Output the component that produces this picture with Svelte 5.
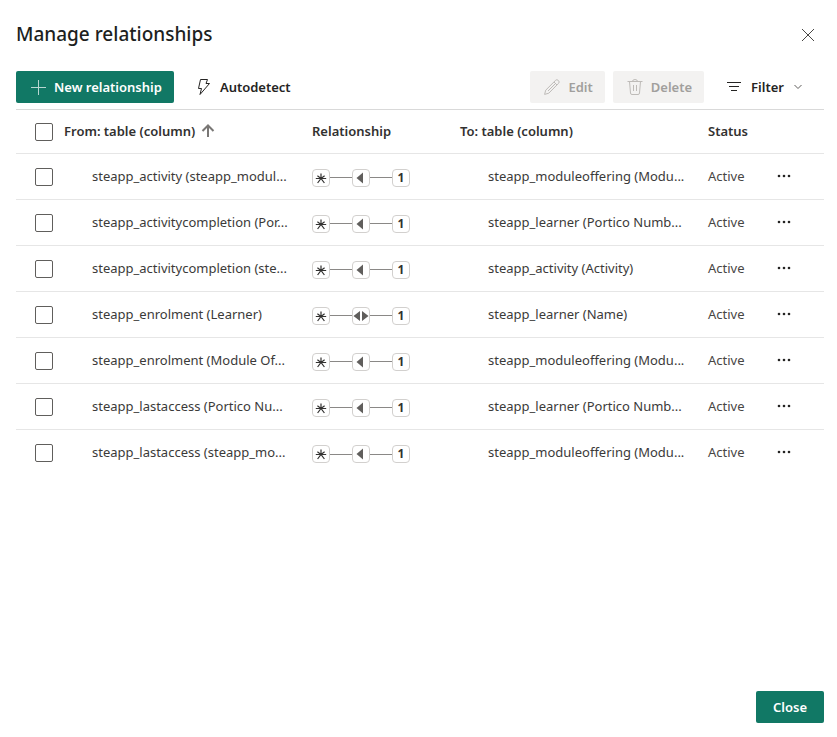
<script>
	const rows = [
		{ from: 'steapp_activity (steapp_modul...', to: 'steapp_moduleoffering (Modu...', both: false },
		{ from: 'steapp_activitycompletion (Por...', to: 'steapp_learner (Portico Numb...', both: false },
		{ from: 'steapp_activitycompletion (ste...', to: 'steapp_activity (Activity)', both: false },
		{ from: 'steapp_enrolment (Learner)', to: 'steapp_learner (Name)', both: true },
		{ from: 'steapp_enrolment (Module Of...', to: 'steapp_moduleoffering (Modu...', both: false },
		{ from: 'steapp_lastaccess (Portico Nu...', to: 'steapp_learner (Portico Numb...', both: false },
		{ from: 'steapp_lastaccess (steapp_mo...', to: 'steapp_moduleoffering (Modu...', both: false }
	];

	let selected = $state(rows.map(() => false));
	let count = $derived(selected.filter(Boolean).length);

	const toggleAll = (e) => {
		const { checked } = e.currentTarget;
		selected = rows.map(() => checked);
	};
</script>

<div class="dialog" role="dialog" aria-labelledby="title">
	<header>
		<h1 id="title">Manage relationships</h1>
		<button class="dismiss" aria-label="Dismiss">
			<svg width="14" height="14" viewBox="0 0 14 14"><path d="M1 1l12 12M13 1L1 13" /></svg>
		</button>
	</header>

	<div class="toolbar">
		<button class="primary new">
			<svg width="16" height="16" viewBox="0 0 16 16"><path d="M8.5 1v15M1 8.5h15" /></svg>
			New relationship
		</button>
		<button class="plain">
			<svg width="16" height="18" viewBox="0 0 16 18">
				<path d="M4.5 1.5h7L10 5.5h3.5L4 16.5l1.5-6h-3z" />
			</svg>
			Autodetect
		</button>
		<div class="spacer"></div>
		<button class="muted" disabled={count !== 1}>
			<svg width="16" height="16" viewBox="0 0 16 16">
				<path
					d="M.6 15.4l1.1-4.2L11.4 1.5a2 2 0 0 1 3 0 2 2 0 0 1 0 3L4.8 14.2zM10 3l3 3M11.5 4.5L4 12"
				/>
			</svg>
			Edit
		</button>
		<button class="muted" disabled={count === 0}>
			<svg width="16" height="16" viewBox="0 0 16 16">
				<path
					d="M.5 2.5h15M5.5 2.5a2.5 2 0 0 1 5 0M2.5 2.5l1 11.5a1.5 1.5 0 0 0 1.5 1.5h6a1.5 1.5 0 0 0 1.5-1.5l1-11.5M6.5 6v6M9.5 6v6"
				/>
			</svg>
			Delete
		</button>
		<button class="filter">
			<svg width="14" height="12" viewBox="0 0 14 12"><path d="M0 1.5h14M2 5.5h10M4 9.5h6" /></svg>
			Filter
			<svg class="chevron" width="8" height="6" viewBox="0 0 8 6"><path d="M.5 1L4 4.5 7.5 1" /></svg>
		</button>
	</div>

	<table>
		<colgroup>
			<col class="col-check" />
			<col />
			<col class="col-rel" />
			<col />
			<col class="col-status" />
			<col class="col-more" />
		</colgroup>
		<thead>
			<tr>
				<td class="check">
					<input
						type="checkbox"
						aria-label="Select all relationships"
						checked={count === rows.length}
						onchange={toggleAll}
					/>
				</td>
				<th scope="col" aria-sort="ascending">
					<span class="sorted">
						From: table (column)
						<svg width="14" height="14" viewBox="0 0 14 14"><path d="M7 13V2M1.5 7L7 1.5 12.5 7" /></svg>
					</span>
				</th>
				<th scope="col">Relationship</th>
				<th scope="col">To: table (column)</th>
				<th scope="col">Status</th>
				<td></td>
			</tr>
		</thead>
		<tbody>
			{#each rows as row, i}
				<tr>
					<td class="check">
						<input type="checkbox" aria-label="Select {row.from}" bind:checked={selected[i]} />
					</td>
					<td class="name">{row.from}</td>
					<td class="rel">
						<div class="link">
							<span class="chip">
								<svg class="star" width="12" height="12" viewBox="0 0 12 12">
									<path d="M6 1.5v5M.8 6.5h10.4M2.4 3.8L6 6.500l3.600-2.700M2.600 11L6 6.500l3.400 4.500" />
								</svg>
							</span>
							<span class="line"></span>
							<span class="chip">
								<svg class="arrow" width="16" height="12" viewBox="0 0 16 12">
									{#if row.both}
										<path d="M7 1v10L.5 6zM9 1v10l6.5-5z" />
									{:else}
										<path d="M10 .5v11L3.5 6z" />
									{/if}
								</svg>
							</span>
							<span class="line"></span>
							<span class="chip">1</span>
						</div>
					</td>
					<td class="name">{row.to}</td>
					<td class="status">Active</td>
					<td>
						<button class="more" aria-label="More options">
							<svg width="14" height="4" viewBox="0 0 14 4">
								<circle cx="2" cy="2" r="1.3" />
								<circle cx="7" cy="2" r="1.3" />
								<circle cx="12" cy="2" r="1.3" />
							</svg>
						</button>
					</td>
				</tr>
			{/each}
		</tbody>
	</table>

	<footer>
		<button class="primary close">Close</button>
	</footer>
</div>

<style>
	:global(body) {
		background: #fff;
	}
	.dialog {
		box-sizing: border-box;
		min-height: 100vh;
		display: flex;
		flex-direction: column;
		padding: 20px 13px 14px 16px;
		font-family: 'Segoe UI', 'Noto Sans', sans-serif;
		font-size: 13px;
		line-height: 20px;
		color: #323130;
	}
	header {
		display: flex;
		align-items: center;
		justify-content: space-between;
		height: 30px;
		padding-right: 8px;
		margin-bottom: 21px;
	}
	h1 {
		margin: 0;
		padding-bottom: 2px;
		font-size: 19px;
		line-height: 28px;
		font-weight: 500;
		color: #201f1e;
	}
	svg {
		flex: none;
		fill: none;
		stroke: currentColor;
	}
	button {
		display: flex;
		align-items: center;
		height: 32px;
		padding: 0 16px;
		border: 0;
		border-radius: 2px;
		background: none;
		color: #252423;
		font: inherit;
		font-weight: 600;
		white-space: nowrap;
	}
	.dismiss {
		height: 16px;
		padding: 0 1px;
		color: #484644;
	}
	.toolbar {
		display: flex;
		gap: 8px;
		padding-bottom: 6px;
	}
	.toolbar button {
		gap: 8px;
		padding: 0 12px 0 14px;
	}
	.primary {
		background: #117865;
		color: #fff;
	}
	.new svg {
		opacity: 0.7;
	}
	.spacer {
		flex: 1;
	}
	.muted:disabled {
		background: #f3f2f1;
		color: #a19f9d;
	}
	.muted:disabled svg {
		color: #bebbb8;
	}
	.toolbar .filter {
		gap: 10px;
		padding: 0 22px 0 15px;
	}
	.chevron {
		color: #605e5c;
	}
	table {
		width: 100%;
		table-layout: fixed;
		border-collapse: separate;
		border-spacing: 0;
		border-top: 1px solid #d9d9d9;
	}
	.col-check {
		width: 48px;
	}
	.col-rel {
		width: 148px;
	}
	.col-status {
		width: 68px;
	}
	.col-more {
		width: 48px;
	}
	th,
	td {
		box-sizing: border-box;
		height: 46px;
		padding: 0 0 2px;
		border-bottom: 1px solid #e6e6e6;
		text-align: left;
		vertical-align: middle;
	}
	thead th,
	thead td {
		height: 44px;
		font-weight: 600;
	}
	tbody tr:last-child td {
		border-bottom: 0;
	}
	.sorted {
		display: flex;
		align-items: center;
		gap: 6px;
	}
	.sorted svg {
		color: #797775;
		stroke-width: 2;
	}
	.check {
		padding: 0 0 0 19px;
	}
	.rel {
		padding: 2px 0 0;
	}
	input {
		display: block;
		box-sizing: border-box;
		width: 18px;
		height: 18px;
		margin: 0;
		appearance: none;
		border: 1px solid #605e5c;
		border-radius: 2px;
		background: #fff;
	}
	input:checked {
		border-color: #117865;
		background: #117865;
	}
	.name {
		padding: 0 20px 2px 28px;
		overflow: hidden;
		text-overflow: ellipsis;
		white-space: nowrap;
		color: #3b3a39;
	}
	.status {
		color: #484644;
	}
	.link {
		display: flex;
		align-items: center;
	}
	.chip {
		box-sizing: border-box;
		width: 18px;
		height: 18px;
		display: flex;
		align-items: center;
		justify-content: center;
		border: 1px solid #d2d0ce;
		border-radius: 4px;
		font-size: 12px;
		line-height: 16px;
		font-weight: 700;
	}
	.line {
		width: 22px;
		height: 1px;
		background: #8a8886;
	}
	.star {
		stroke-width: 1.2;
	}
	.arrow {
		fill: #605e5c;
		stroke: none;
	}
	.more {
		height: 24px;
		padding: 0 1px;
	}
	.more svg {
		fill: currentColor;
		stroke: none;
	}
	footer {
		display: flex;
		justify-content: flex-end;
		margin-top: auto;
		padding-top: 16px;
	}
	.close {
		min-width: 68px;
		justify-content: center;
	}
</style>
